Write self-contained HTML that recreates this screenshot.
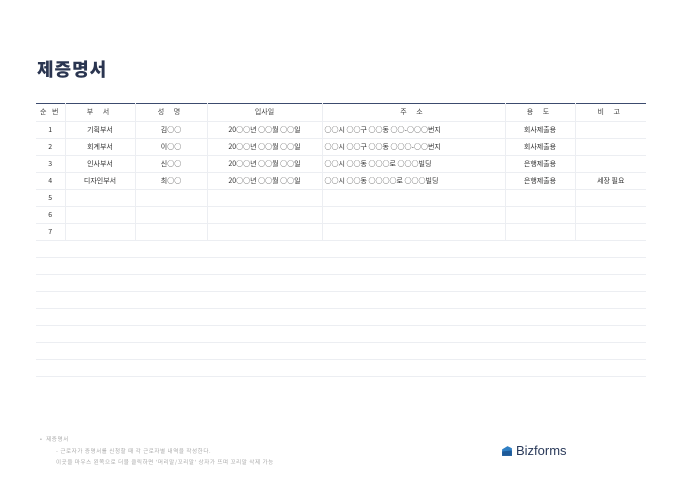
<!DOCTYPE html>
<html><head><meta charset="utf-8"><style>
body{margin:0;width:680px;height:481px;background:#fff;font-family:"Liberation Sans","Noto Sans CJK KR",sans-serif;position:relative;overflow:hidden}
h1{position:absolute;left:37px;top:56px;margin:0;font-size:18px;color:#2a3550;font-weight:900;letter-spacing:1px;font-family:"Noto Sans CJK KR",sans-serif}
table{position:absolute;left:36px;top:103px;width:610px;border-collapse:collapse;border-top:1.5px solid #3c4b6e;border-bottom:1px solid #c8ccd4;font-size:7px;color:#333;font-family:"Noto Sans CJK KR",sans-serif}
td{height:16px;padding:0;text-align:center;border-bottom:1px solid #eceef2;border-left:1px solid #eceef2;line-height:1;white-space:nowrap}
tr.h td{height:17px;letter-spacing:4px;color:#444}
td:first-child{border-left:none}
tr.e td{border-left:none}
td.l{text-align:left;padding-left:2px}
.n{position:absolute;font-size:5.5px;color:#aaa;letter-spacing:0.6px;font-family:"Noto Sans CJK KR",sans-serif}
.logo{position:absolute;left:501px;top:443px;font-size:13px;color:#2a3a5a;display:flex;align-items:center;gap:3px}
</style></head><body>
<h1>제증명서</h1>
<table>
<colgroup><col style="width:29px"><col style="width:70px"><col style="width:72px"><col style="width:115px"><col style="width:183px"><col style="width:70px"><col style="width:71px"></colgroup>
<tr class="h"><td style="letter-spacing:2px">순 번</td><td>부 서</td><td>성 명</td><td style="letter-spacing:0">입사일</td><td>주 소</td><td>용 도</td><td>비 고</td></tr>
<tr><td>1</td><td>기획부서</td><td>김○○</td><td>20○○년 ○○월 ○○일</td><td class="l">○○시 ○○구 ○○동 ○○-○○○번지</td><td>회사제출용</td><td></td></tr>
<tr><td>2</td><td>회계부서</td><td>이○○</td><td>20○○년 ○○월 ○○일</td><td class="l">○○시 ○○구 ○○동 ○○○-○○번지</td><td>회사제출용</td><td></td></tr>
<tr><td>3</td><td>인사부서</td><td>신○○</td><td>20○○년 ○○월 ○○일</td><td class="l">○○시 ○○동 ○○○로 ○○○빌딩</td><td>은행제출용</td><td></td></tr>
<tr><td>4</td><td>디자인부서</td><td>최○○</td><td>20○○년 ○○월 ○○일</td><td class="l">○○시 ○○동 ○○○○로 ○○○빌딩</td><td>은행제출용</td><td>세장 필요</td></tr>
<tr><td>5</td><td></td><td></td><td></td><td></td><td></td><td></td></tr>
<tr><td>6</td><td></td><td></td><td></td><td></td><td></td><td></td></tr>
<tr><td>7</td><td></td><td></td><td></td><td></td><td></td><td></td></tr>
<tr class="e"><td></td><td></td><td></td><td></td><td></td><td></td><td></td></tr>
<tr class="e"><td></td><td></td><td></td><td></td><td></td><td></td><td></td></tr>
<tr class="e"><td></td><td></td><td></td><td></td><td></td><td></td><td></td></tr>
<tr class="e"><td></td><td></td><td></td><td></td><td></td><td></td><td></td></tr>
<tr class="e"><td></td><td></td><td></td><td></td><td></td><td></td><td></td></tr>
<tr class="e"><td></td><td></td><td></td><td></td><td></td><td></td><td></td></tr>
<tr class="e"><td></td><td></td><td></td><td></td><td></td><td></td><td></td></tr>
<tr class="e"><td></td><td></td><td></td><td></td><td></td><td></td><td></td></tr>
</table>
<div class="n" style="left:40px;top:435px">•&nbsp; 제증명서</div>
<div class="n" style="left:56px;top:447px">- 근로자가 증명서를 신청할 때 각 근로자별 내역을 작성한다.</div>
<div class="n" style="left:56px;top:458px">이곳을 마우스 왼쪽으로 더블 클릭하면 '머리말/꼬리말' 상자가 뜨며 꼬리말 삭제 가능</div>
<div class="logo"><svg width="12" height="12" viewBox="0 0 11 11"><path d="M1 4 L6 1 L10 3 L10 10 L1 10Z" fill="#2f7fc4"/><path d="M1 6 L10 5 L10 10 L1 10Z" fill="#1d5a99"/></svg>Bizforms</div>
</body></html>
